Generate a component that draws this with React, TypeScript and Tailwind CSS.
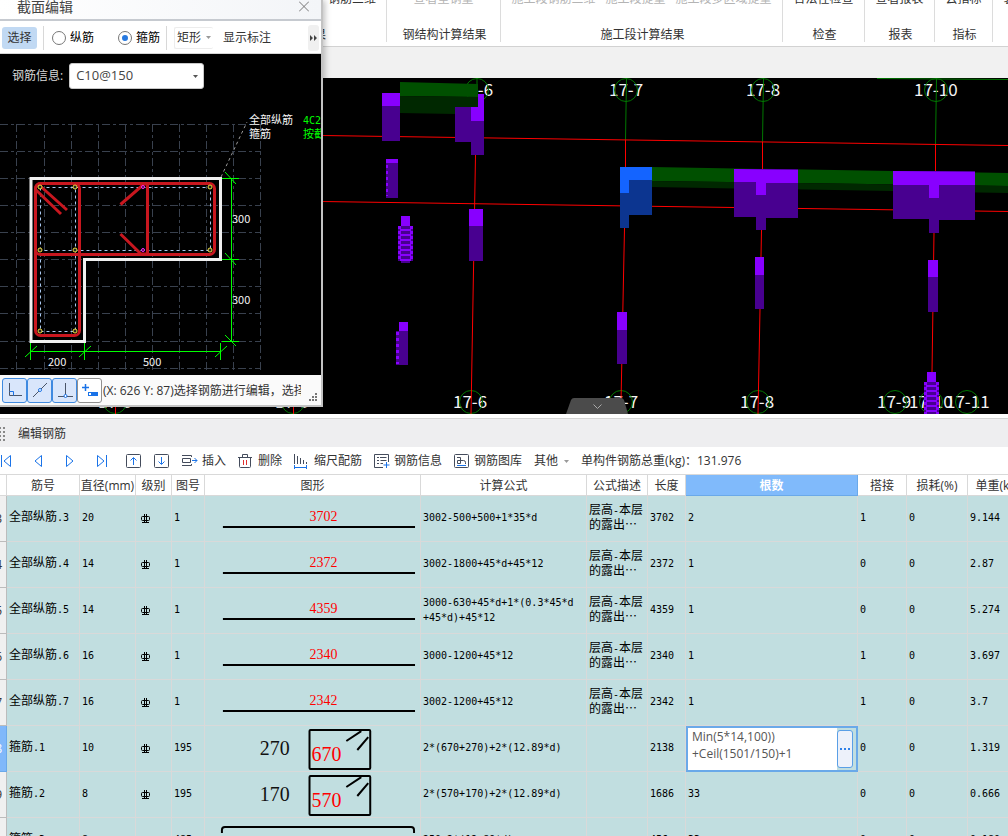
import { useState, type ReactNode } from 'react';

interface Bar {
  no: number;
  name: string;
  dia: string;
  shape: string;
  size: string;
  side?: string;
  formula: string;
  desc?: string;
  length: string;
  count: string;
  lap: string;
  loss: string;
  weight: string;
}

const DESC = '层高-本层\n的露出⋯';

const bars: Bar[] = [
  { no: 3, name: '全部纵筋.3', dia: '20', shape: '1', size: '3702', formula: '3002-500+500+1*35*d', desc: DESC, length: '3702', count: '2', lap: '1', loss: '0', weight: '9.144' },
  { no: 4, name: '全部纵筋.4', dia: '14', shape: '1', size: '2372', formula: '3002-1800+45*d+45*12', desc: DESC, length: '2372', count: '1', lap: '0', loss: '0', weight: '2.87' },
  { no: 5, name: '全部纵筋.5', dia: '14', shape: '1', size: '4359', formula: '3000-630+45*d+1*(0.3*45*d\n+45*d)+45*12', desc: DESC, length: '4359', count: '1', lap: '0', loss: '0', weight: '5.274' },
  { no: 6, name: '全部纵筋.6', dia: '16', shape: '1', size: '2340', formula: '3000-1200+45*12', desc: DESC, length: '2340', count: '1', lap: '1', loss: '0', weight: '3.697' },
  { no: 7, name: '全部纵筋.7', dia: '16', shape: '1', size: '2342', formula: '3002-1200+45*12', desc: DESC, length: '2342', count: '1', lap: '1', loss: '0', weight: '3.7' },
  { no: 8, name: '箍筋.1', dia: '10', shape: '195', size: '670', side: '270', formula: '2*(670+270)+2*(12.89*d)', length: '2138', count: '', lap: '0', loss: '0', weight: '1.319' },
  { no: 9, name: '箍筋.2', dia: '8', shape: '195', size: '570', side: '170', formula: '2*(570+170)+2*(12.89*d)', length: '1686', count: '33', lap: '0', loss: '0', weight: '0.666' },
  { no: 10, name: '箍筋.3', dia: '8', shape: '485', size: '250', formula: '250+2*(12.89*d)', length: '456', count: '33', lap: '0', loss: '0', weight: '0.180' },
];

const columns = ['筋号', '直径(mm)', '级别', '图号', '图形', '计算公式', '公式描述', '长度', '根数', '搭接', '损耗(%)', '单重(kg)'];

/* ---------- ribbon ---------- */

function RibbonGroup({ title, items, className }: { title: string; items: string[]; className: string }) {
  return (
    <div className={`flex h-[42px] shrink-0 flex-col justify-between border-r border-[#dcdcdc] ${className}`}>
      <div className="-mt-[9px] flex h-4 justify-center gap-[10px] leading-4">
        {items.map(i => <button key={i} className="whitespace-nowrap">{i}</button>)}
      </div>
      <div className="h-4 pl-[2px] text-center leading-[18px] text-[#333] whitespace-nowrap">{title}</div>
    </div>
  );
}

function Ribbon() {
  return (
    <header className="flex h-[47px] shrink-0 overflow-hidden border-b border-[#d2d2d2] bg-white text-[#333]">
      {/* this group runs on under the section dialog */}
      <div className="flex h-[42px] w-[387px] shrink-0 flex-col justify-between border-r border-[#dcdcdc]">
        <button className="-mt-[9px] mr-[10px] h-4 self-end leading-4">钢筋三维</button>
        <div className="mr-[60px] h-4 self-end leading-[18px]">计算结果</div>
      </div>
      <RibbonGroup title="钢结构计算结果" items={['查看型钢量']} className="w-[114px] text-[#b4b4b4]" />
      <RibbonGroup title="施工段计算结果" items={['施工段钢筋三维', '施工段提量', '施工段多区域提量']} className="w-[282px] text-[#b4b4b4]" />
      <RibbonGroup title="检查" items={['合法性检查']} className="w-[82px]" />
      <RibbonGroup title="报表" items={['查看报表']} className="w-[70px]" />
      <RibbonGroup title="指标" items={['云指标']} className="w-[58px]" />
      <RibbonGroup title="" items={['装配式']} className="w-[58px]" />
    </header>
  );
}

/* ---------- model view ---------- */

const BRIGHT = '#8800ff';
const DARK = '#480090';

function Column({ x, y, w, cap, h }: { x: number; y: number; w: number; cap: number; h: number }) {
  return (
    <g>
      <rect x={x} y={y} width={w} height={h} fill={DARK} />
      <rect x={x} y={y} width={w} height={cap} fill={BRIGHT} />
    </g>
  );
}

function Coil({ x, y, bands }: { x: number; y: number; bands: number }) {
  return (
    <g>
      <rect x={x + 3} y={y} width={9} height={10} fill={BRIGHT} />
      <rect x={x} y={y + 10} width={15} height={bands * 5} fill={BRIGHT} />
      {Array.from({ length: bands }).map((_, i) => (
        <g key={i} fill={DARK}>
          <rect x={x + 3} y={y + 10 + i * 5} width={9} height={3} />
          <rect x={x} y={y + 13 + i * 5} width={2} height={2} />
          <rect x={x + 13} y={y + 13 + i * 5} width={2} height={2} />
        </g>
      ))}
      <rect x={x + 3} y={y + 10 + bands * 5} width={9} height={2} fill={DARK} />
    </g>
  );
}

const topAxes = [
  { x: 477, tx: 459, label: '17-6' },
  { x: 626, tx: 609, label: '17-7' },
  { x: 763, tx: 746, label: '17-8' },
  { x: 936, tx: 914, label: '17-10' },
];

const bottomAxes = [
  { x: 115, tx: 98, label: '17-3' },
  { x: 293, tx: 275, label: '17-5' },
  { x: 471, tx: 453, label: '17-6' },
  { x: 621, tx: 604, label: '17-7' },
  { x: 758, tx: 740, label: '17-8' },
  { x: 895, tx: 877, label: '17-9' },
  { x: 931, tx: 909, label: '17-10' },
  { x: 967, tx: 946, label: '17-11' },
];

function ModelView() {
  return (
    <section className="h-[336px] shrink-0 overflow-hidden bg-black">
      <svg viewBox="0 78 1008 336" preserveAspectRatio="xMinYMin slice" className="block h-full w-full">
        <g fill="#f4f4f4" fontSize="17" className="font-['Noto_Sans_CJK_SC',sans-serif]">
          {topAxes.map(a => <text key={a.label} x={a.tx} y="96">{a.label}</text>)}
          {bottomAxes.map(a => <text key={a.label} x={a.tx} y="408">{a.label}</text>)}
        </g>
        <g stroke="#007800" fill="none">
          {topAxes.map(a => <circle key={a.label} cx={a.x} cy="90" r="11.5" />)}
          {bottomAxes.map(a => <circle key={a.label} cx={a.x} cy="402" r="11.5" />)}
          <path d="M477 78v12M626.5 78L625.5 140M763.5 78L762.5 142M936.5 78L935.5 144M877 78.5L1008 79.5" />
        </g>
        <g stroke="#ff0000" fill="none">
          <path d="M322 135.500L1008 145.500M322 201.500L1008 211.500" />
          <path d="M475.500 155L471 414M625.500 140V168M624.500 228L621 402M762.500 142V170M761.500 230L758 414M935.500 144V172M934 232L932 373M115.500 402V414M293.500 402V414" />
        </g>

        <polygon points="400,82 478,84 478,97 400,96" fill="#005000" />
        <polygon points="400,96 478,97 478,107 455,107 455,114 400,113" fill="#002800" />
        <Column x={382} y={93} w={18} cap={13} h={48} />
        <path d="M455 107H471V121H484V155H471V142H455Z" fill={DARK} />
        <path d="M478 94H484V121H471V107H478Z" fill={BRIGHT} />

        <Column x={386} y={159} w={12} cap={4} h={39} />
        <path d="M387 165V196" stroke={BRIGHT} strokeWidth="2" strokeDasharray="3 3" />
        <Coil x={398} y={216} bands={7} />
        <Column x={469} y={209} w={14} cap={17} h={52} />
        <rect x={399} y={322} width={9} height={9} fill={BRIGHT} />
        <rect x={396} y={331} width={12} height={34} fill={DARK} />
        <path d="M397.500 332V364" stroke={BRIGHT} strokeWidth="3" strokeDasharray="3 3" />

        <polygon points="652,167 1008,173 1008,186 652,181" fill="#005000" />
        <polygon points="652,181 1008,186 1008,193 652,187" fill="#002800" />
        <path d="M629 180H652V215H629V228H620V193H629Z" fill="#0c3590" />
        <path d="M620 167H652V180H629V193H620Z" fill="#1464ff" />

        <path d="M734 169H798V218H766V230H756V217H734Z" fill={DARK} />
        <path d="M734 169L798 170V183H766V195H756V182H734Z" fill={BRIGHT} />
        <path d="M893 171H975V220H939V233H929V219H893Z" fill={DARK} />
        <path d="M893 171L975 172V185H939V198H929V185H893Z" fill={BRIGHT} />

        <Column x={617} y={312} w={10} cap={18} h={52} />
        <Column x={755} y={257} w={9} cap={18} h={52} />
        <Column x={928} y={260} w={10} cap={17} h={52} />
        <Coil x={924} y={372} bands={7} />

        <path d="M566 414L571 400Q572 398 574 398H621Q623 398 624 400L628 414Z" fill="#4b4b4b" />
        <path d="M593.500 404.500L597.500 408.500L601.500 404.500" stroke="#aaa" fill="none" />
      </svg>
    </section>
  );
}

/* ---------- section dialog ---------- */

const gridX = [16, 44, 71, 98, 125, 152, 179, 206, 233, 260];
const gridY = [124, 151, 178, 205, 232, 259, 286, 313, 341, 368];
const cornerBars = [[40, 187], [75, 187], [210, 187], [40, 250], [75, 250], [210, 250], [40, 331], [75, 331]];

function SectionDrawing() {
  return (
    <svg viewBox="0 98 321 277" className="block w-full shrink-0">
      <g stroke="#39414e" strokeDasharray="8 3 3 3">
        {gridX.map(x => <line key={x} x1={x + 0.5} x2={x + 0.5} y1="124" y2="372" />)}
        {gridY.map(y => <line key={y} x1="0" x2="261" y1={y + 0.5} y2={y + 0.5} />)}
      </g>
      <path d="M221 177L247 122" stroke="#999" strokeDasharray="3 3" />

      <path d="M31 178.500H220.500V259.500H84.500V341.500H31Z" fill="none" stroke="#f0f0f0" strokeWidth="3" />
      <g fill="none" stroke="#a9c8f0" strokeDasharray="3 3">
        <path d="M40.500 187.500H210.500V250.500H40.500M40.500 187.500V331.500H75.500V187.500" />
      </g>
      <g fill="none" stroke="#c8171f" strokeWidth="3">
        <rect x="35.500" y="183.500" width="179" height="71" rx="5" />
        <rect x="35.500" y="183.500" width="44" height="152" rx="5" />
        <path d="M147.500 184V254M147 184H144L120.500 204.500M147 254H141L120.500 234M38 184L67 210M36 190L61 214" />
      </g>
      <g fill="#222" stroke="#f0e040">
        {cornerBars.map(([x, y]) => <circle key={`${x}-${y}`} cx={x} cy={y} r="2" />)}
      </g>
      <g fill="#222" stroke="#ff20ff">
        <circle cx="143" cy="187" r="1.500" />
        <circle cx="143" cy="250" r="1.500" />
      </g>

      <g fill="none" stroke="#00ff00">
        <path d="M231.500 178V342M222 178.500H239M222 259.500H239M222 341.500H239M225 172L236 184M225 253L236 265M225 335L236 346" />
        <path d="M30 351.500H221M30.500 343V360M84.500 343V360M220.500 343V360M25 357L37 346M79 357L91 346M215 357L227 346" />
      </g>
      <g fill="#f4f4f4" fontSize="11" className="font-['Noto_Sans_CJK_SC',sans-serif]">
        <text x="232" y="223">300</text>
        <text x="232" y="304">300</text>
        <text x="48" y="366">200</text>
        <text x="143" y="366">500</text>
        <text x="249" y="124">全部纵筋</text>
        <text x="249" y="138">箍筋</text>
        <text x="303" y="138" fill="#00ff00">按截面</text>
      </g>
      <text x="303" y="124" fontSize="10" fill="#00ff00" className="font-['DejaVu_Sans_Mono',monospace]">4C25</text>
    </svg>
  );
}

function SnapButton({ label, active, children }: { label: string; active?: boolean; children: ReactNode }) {
  return (
    <button
      aria-label={label}
      className={`flex h-[25px] w-[25px] shrink-0 items-center justify-center rounded-[3px] border ${active ? 'border-[#3f8ae0] bg-[#d9e6fb]' : 'border-[#8f8f8f] bg-white'}`}
    >
      <svg width="20" height="20" viewBox="0 0 20 20" fill="none" className="shrink-0">{children}</svg>
    </button>
  );
}

const radio = 'm-px h-3 w-3 appearance-none rounded-full bg-white outline outline-[#777] checked:border-[3px] checked:border-white checked:bg-[#2679e0]';

function SectionDialog() {
  const [kind, setKind] = useState('stirrup');

  return (
    <div role="dialog" aria-label="截面编辑" className="absolute top-0 left-0 w-[323px] border-r-2 border-b-2 border-[#c3c3c3] bg-white shadow-[2px_0_6px_rgba(0,0,0,0.25)]">
      <div className="flex h-[21px] justify-between border-b-2 border-[#c6cad0] bg-gradient-to-r from-white to-[#f3f5f8] pr-3 pl-[17px]">
        <h2 className="text-[14px] leading-[13px] text-[#444]">截面编辑</h2>
        <button aria-label="关闭" className="h-3">
          <svg width="10" height="12" viewBox="0 0 10 12" stroke="#777" fill="none"><path d="M0 1.500L10 11.500M10 1.500L0 11.500" /></svg>
        </button>
      </div>

      <div className="flex h-[33px] items-center border-b border-[#d5d5d5] pt-px pl-[2px] text-black">
        <button className="h-[22px] w-[35px] rounded-[3px] bg-[#c1d9f3] text-[#333]">选择</button>
        <span className="ml-[6px] h-6 w-px bg-[#d8d8d8]" />
        <label className="ml-2 flex items-center gap-1">
          <input type="radio" name="kind" checked={kind === 'main'} onChange={() => setKind('main')} className={radio} />
          纵筋
        </label>
        <label className="ml-6 flex items-center gap-1">
          <input type="radio" name="kind" checked={kind === 'stirrup'} onChange={() => setKind('stirrup')} className={radio} />
          箍筋
        </label>
        <span className="ml-[6px] h-6 w-px bg-[#d8d8d8]" />
        <button className="ml-[7px] flex h-[22px] items-center gap-[5px] rounded-[2px] border border-r-0 border-[#ececec] px-[2px] text-[#333]">
          矩形
          <svg width="5" height="3" viewBox="0 0 5 3" fill="#999"><path d="M0 0H5L2.500 3Z" /></svg>
        </button>
        <button className="ml-[10px] text-[#333]">显示标注</button>
        <button aria-label="更多" className="mr-[2px] ml-auto flex h-[26px] w-[11px] items-center justify-center rounded-[3px] bg-[#f0f0f0]">
          <svg width="8" height="6" viewBox="0 0 8 6" fill="#444"><path d="M0 0L3 3L0 6ZM4 0L7 3L4 6Z" /></svg>
        </button>
      </div>

      <div className="overflow-hidden bg-black">
        <div className="flex h-11 items-center gap-[6px] pl-3">
          <label htmlFor="rebar" className="text-[#d8d8d8]">钢筋信息:</label>
          <div className="relative">
            <select id="rebar" className="h-[26px] w-[135px] appearance-none rounded-[3px] border border-[#c8c8c8] bg-white pl-[6px] text-[13px] text-[#444]">
              <option>C10@150</option>
            </select>
            <svg width="5" height="3" viewBox="0 0 5 3" fill="#555" className="pointer-events-none absolute top-3 right-[6px]"><path d="M0 0H5L2.500 3Z" /></svg>
          </div>
        </div>
        <SectionDrawing />
      </div>

      <div className="flex h-[30px] items-center bg-[#fafafa] pl-[2px] text-[#333]">
        <SnapButton label="直角" active>
          <path d="M4.500 3V15.500H17" stroke="#4a5568" />
          <path d="M4.500 11.500H8.500V15.500" stroke="#1a73e8" />
        </SnapButton>
        <SnapButton label="中点" active>
          <path d="M3 17L17 3" stroke="#4a5568" />
          <circle cx="10" cy="10" r="1.500" fill="#fff" stroke="#1a73e8" />
        </SnapButton>
        <SnapButton label="垂足" active>
          <path d="M10.500 3V16M3 16.500H18" stroke="#4a5568" />
          <circle cx="10.500" cy="16" r="1.500" fill="#fff" stroke="#1a73e8" />
        </SnapButton>
        <SnapButton label="偏移">
          <path d="M5.500 4V11M2 7.500H9" stroke="#1a73e8" strokeWidth="1.500" />
          <rect x="8" y="12" width="10" height="4" fill="#1a73e8" />
          <rect x="9" y="13" width="2" height="2" fill="#fff" />
        </SnapButton>
        <output className="ml-px w-[198px] overflow-hidden pt-px whitespace-nowrap">(X: 626 Y: 87)选择钢筋进行编辑，选择</output>
        <svg width="9" height="9" viewBox="0 0 9 9" fill="#777" className="mt-auto mb-[3px] ml-auto mr-[3px] shrink-0">
          <path d="M6 0h2v2h-2zM3 3h2v2h-2zM6 3h2v2h-2zM0 6h2v2h-2zM3 6h2v2h-2zM6 6h2v2h-2z" />
        </svg>
      </div>
    </div>
  );
}

/* ---------- rebar table ---------- */

function Tool({ label, text, children }: { label?: string; text?: string; children: ReactNode }) {
  return (
    <button aria-label={label ?? text} className="flex shrink-0 items-center gap-1 whitespace-nowrap">
      <svg width="16" height="16" viewBox="0 0 16 16" fill="none" stroke="#444c5c">{children}</svg>
      {text}
    </button>
  );
}

function Toolbar() {
  return (
    <div className="flex h-[28px] shrink-0 items-center gap-3 overflow-hidden border-b border-[#d9d9d9] bg-white pt-px text-[#333]">
      <div className="-ml-[2px] mr-1 flex shrink-0 gap-4">
        <Tool label="首行"><path d="M3.500 2V14M12.500 2.500V13.500L6 8Z" stroke="#1a73e8" /></Tool>
        <Tool label="上一行"><path d="M11.500 2.500V13.500L5 8Z" stroke="#1a73e8" /></Tool>
        <Tool label="下一行"><path d="M4.500 2.500V13.500L11 8Z" stroke="#1a73e8" /></Tool>
        <Tool label="末行"><path d="M3.500 2.500V13.500L10 8ZM12.500 2V14" stroke="#1a73e8" /></Tool>
      </div>
      <Tool label="上移">
        <rect x="0.500" y="1.500" width="14" height="13" rx="1" />
        <path d="M7.500 12V5M4.500 7.500L7.500 4.500L10.500 7.500" stroke="#1a73e8" />
      </Tool>
      <Tool label="下移">
        <rect x="0.500" y="1.500" width="14" height="13" rx="1" />
        <path d="M7.500 4V11M4.500 8.500L7.500 11.500L10.500 8.500" stroke="#1a73e8" />
      </Tool>
      <Tool text="插入">
        <path d="M0 2.500H9.500V4M0.500 5.500H8.500V9.500H0.500ZM0 12.500H9.500V11" />
        <path d="M10 7.500H15M12.500 5L15 7.500L12.500 10" stroke="#1a73e8" />
      </Tool>
      <Tool text="删除">
        <path d="M0 4.500H14M4.500 4V1.500H9.500V4M1.500 5V13.500Q1.500 14.500 2.500 14.500H11.500Q12.500 14.500 12.500 13.500V5" />
        <path d="M5.500 7V12M8.500 7V12" stroke="#e03030" />
      </Tool>
      <Tool text="缩尺配筋">
        <path d="M0.500 1V11M3.500 3V11M6.500 5V11M9.500 7V11M12.500 9V11" />
        <path d="M0.500 12V16M12.500 12V16M1 14.500H12" stroke="#1a73e8" />
      </Tool>
      <Tool text="钢筋信息">
        <path d="M9 14.500H0.500V1.500H14.500V9M3 4.500H5M6 4.500H12.500M3 7.500H5M6.500 7.500H12.500M3 10.500H5M6.500 10.500H9" />
        <path d="M12.500 9V15M9.500 12H15.500" stroke="#1a73e8" />
      </Tool>
      <Tool text="钢筋图库">
        <rect x="0.500" y="1.500" width="14" height="13" rx="1" />
        <path d="M3 4.500H6.500V10.500H3.500V7.500H9.500Q11.500 7.500 11.500 9.500V11" />
        <path d="M3 12.500H12" stroke="#1a73e8" />
      </Tool>
      <button className="flex shrink-0 items-center gap-[6px]">
        其他
        <svg width="5" height="3" viewBox="0 0 5 3" fill="#999"><path d="M0 0H5L2.500 3Z" /></svg>
      </button>
      <span className="shrink-0">单构件钢筋总重(kg)：131.976</span>
    </div>
  );
}

// Latin runs are half as wide as a Chinese character, so they get their own mono face
function CellText({ text }: { text: string }) {
  return (
    <span className="block text-xs leading-[14px] whitespace-pre">
      {text.split(/([\x21-\x7e]+)/).map((part, i) =>
        i % 2 ? <span key={i} className="font-['DejaVu_Sans_Mono',monospace] text-[10px]">{part}</span> : part
      )}
    </span>
  );
}

function GradeMark() {
  return (
    <svg width="10" height="10" viewBox="0 0 10 10" fill="none" stroke="#000" role="img" aria-label="HRB400">
      <rect x="0.500" y="2.500" width="8" height="4" rx="1" />
      <path d="M3.500 0V9M5.500 0V9M1 8.500H8" />
    </svg>
  );
}

function ShapeCell({ bar }: { bar: Bar }) {
  if (bar.side) {
    return (
      <svg viewBox="0 0 216 45" className="block h-[45px] w-full font-['Liberation_Serif',serif]" fontSize="20">
        <text x="55" y="29" fill="#111">{bar.side}</text>
        <text x="107" y="35" fill="#ff0000">{bar.size}</text>
        <g fill="none" stroke="#000" strokeWidth="2">
          <rect x="105" y="4" width="61" height="39" rx="1" />
          <path d="M142 15L157 5M153 24L164 11" />
        </g>
      </svg>
    );
  }
  if (bar.shape !== '1') {
    return (
      <svg viewBox="0 0 216 45" className="block h-[45px] w-full font-['Liberation_Serif',serif]" fontSize="14">
        <path d="M17 15V12Q17 9 20 9H207Q210 9 210 12V15" fill="none" stroke="#000" strokeWidth="2" />
        <text x="108" y="30" fill="#ff0000">{bar.size}</text>
      </svg>
    );
  }
  return (
    <svg viewBox="0 0 216 45" className="block h-[45px] w-full font-['Liberation_Serif',serif]" fontSize="14">
      <text x="105" y="25" fill="#ff0000">{bar.size}</text>
      <path d="M18 31H211" stroke="#000" strokeWidth="2" />
    </svg>
  );
}

const cell = 'h-[46px] border-r border-b border-[#d9d9d9] bg-[#c1dee0] pt-0 pr-0 pb-[2px] pl-[2px]';

function BarRow({ bar, formula, setFormula }: { bar: Bar; formula: string; setFormula: (v: string) => void }) {
  const editing = bar.no === 8;
  return (
    <tr className="text-black">
      <th className={`h-[46px] border-r border-b p-0 font-normal ${editing ? 'border-[#6aa9e9] bg-[#80b8fa] text-white' : 'border-[#bcbcbc] bg-[#f0f0f0] text-[#333]'}`}>
        <div className="flex justify-end overflow-hidden pr-1">{bar.no}</div>
      </th>
      <td className={cell}><CellText text={bar.name} /></td>
      <td className={cell}><CellText text={bar.dia} /></td>
      <td className={cell}><div className="pt-[2px] pl-[3px]"><GradeMark /></div></td>
      <td className={cell}><CellText text={bar.shape} /></td>
      <td className="h-[46px] border-r border-b border-[#d9d9d9] bg-[#c1dee0] p-0"><ShapeCell bar={bar} /></td>
      <td className={cell}><CellText text={bar.formula} /></td>
      <td className={cell}><CellText text={bar.desc ?? ''} /></td>
      <td className={cell}><CellText text={bar.length} /></td>
      {editing ? (
        <td className="h-[46px] bg-[#c1dee0] p-0">
          <div className="flex h-[46px] border-2 border-[#6aa9e9]">
            <textarea
              aria-label="根数"
              value={formula}
              onChange={e => setFormula(e.target.value)}
              className="min-w-0 flex-1 resize-none overflow-hidden bg-white pl-1 leading-[17px] text-[#555] outline-none"
            />
            <button aria-label="编辑公式" className="my-[2px] mr-[3px] flex w-4 items-center justify-center rounded-[3px] border border-[#5a9fe6] bg-[#edf1fa]">
              <svg width="10" height="2" viewBox="0 0 10 2" fill="#2f80e8"><path d="M0 0h2v2h-2zM4 0h2v2h-2zM8 0h2v2h-2z" /></svg>
            </button>
          </div>
        </td>
      ) : (
        <td className={cell}><CellText text={bar.count} /></td>
      )}
      <td className={cell}><CellText text={bar.lap} /></td>
      <td className={cell}><CellText text={bar.loss} /></td>
      <td className={cell}><CellText text={bar.weight} /></td>
    </tr>
  );
}

function BarTable() {
  const [formula, setFormula] = useState('Min(5*14,100))\n+Ceil(1501/150)+1');
  return (
    <div className="min-h-0 flex-1 overflow-hidden">
      <table className="w-full min-w-[1028px] table-fixed border-separate border-spacing-0">
        <colgroup>
          <col className="w-[7px]" />
          <col className="w-[73px]" />
          <col className="w-[56px]" />
          <col className="w-[36px]" />
          <col className="w-[33px]" />
          <col className="w-[216px]" />
          <col className="w-[166px]" />
          <col className="w-[61px]" />
          <col className="w-[38px]" />
          <col className="w-[172px]" />
          <col className="w-[49px]" />
          <col className="w-[61px]" />
          <col />
        </colgroup>
        <thead>
          <tr className="text-[#333]">
            <th className="h-[21px] border-r border-b border-[#d9d9d9] bg-white p-0" />
            {columns.map(c => (
              <th
                key={c}
                className={`h-[21px] border-r border-b px-0 pt-[2px] pb-0 text-center leading-[18px] whitespace-nowrap ${c === '根数' ? 'border-[#6aa9e9] bg-[#80bafb] font-bold text-white' : 'border-[#d9d9d9] bg-white font-normal'}`}
              >
                {c}
              </th>
            ))}
          </tr>
        </thead>
        <tbody>
          {bars.map(b => <BarRow key={b.no} bar={b} formula={formula} setFormula={setFormula} />)}
        </tbody>
      </table>
    </div>
  );
}

export default function App() {
  return (
    <div className="relative flex h-screen flex-col overflow-hidden bg-white font-['Open_Sans','Noto_Sans_CJK_SC',sans-serif] text-xs">
      <Ribbon />
      <div className="h-[31px] shrink-0 bg-[#f1f1f1]" />
      <ModelView />
      <div className="mt-1 flex h-[29px] shrink-0 items-center gap-3 border-t border-[#d4d4d4] bg-[#eeeef0] pt-[2px] text-[#333]">
        <svg width="6" height="14" viewBox="0 0 6 14" fill="#888">
          <path d="M0 0h1v2h-1zM3 0h2v2h-2zM0 4h1v2h-1zM3 4h2v2h-2zM0 8h1v2h-1zM3 8h2v2h-2zM0 12h1v2h-1zM3 12h2v2h-2z" />
        </svg>
        <h2>编辑钢筋</h2>
      </div>
      <Toolbar />
      <BarTable />
      <SectionDialog />
    </div>
  );
}
